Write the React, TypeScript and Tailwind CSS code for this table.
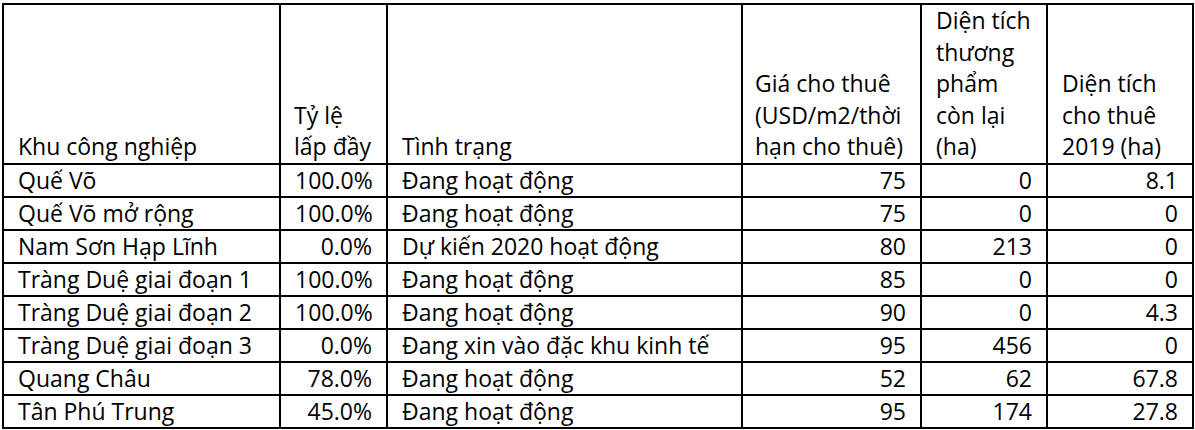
const rows = [
  ["Quế Võ", "100.0%", "Đang hoạt động", "75", "0", "8.1"],
  ["Quế Võ mở rộng", "100.0%", "Đang hoạt động", "75", "0", "0"],
  ["Nam Sơn Hạp Lĩnh", "0.0%", "Dự kiến 2020 hoạt động", "80", "213", "0"],
  ["Tràng Duệ giai đoạn 1", "100.0%", "Đang hoạt động", "85", "0", "0"],
  ["Tràng Duệ giai đoạn 2", "100.0%", "Đang hoạt động", "90", "0", "4.3"],
  ["Tràng Duệ giai đoạn 3", "0.0%", "Đang xin vào đặc khu kinh tế", "95", "456", "0"],
  ["Quang Châu", "78.0%", "Đang hoạt động", "52", "62", "67.8"],
  ["Tân Phú Trung", "45.0%", "Đang hoạt động", "95", "174", "27.8"],
];

export default function App() {
  return (
    <div className="w-[1195px] h-[430px] bg-white pl-[2px] pt-[3px] font-['Open_Sans',sans-serif] text-[23px] text-black">
      <table className="table-fixed border-collapse w-[1190px]">
        <colgroup>
          <col className="w-[277px]" />
          <col className="w-[107px]" />
          <col className="w-[355px]" />
          <col className="w-[179px]" />
          <col className="w-[126px]" />
          <col className="w-[146px]" />
        </colgroup>
        <thead className="leading-[31.5px]">
          <tr className="h-[158px]">
            <th className="border-2 border-black align-bottom text-left font-normal px-[14px]">Khu công nghiệp</th>
            <th className="border-2 border-black align-bottom text-left font-normal pl-[13px] pr-[4px] whitespace-nowrap">
              Tỷ lệ
              <br />
              lấp đầy
            </th>
            <th className="border-2 border-black align-bottom text-left font-normal px-[14px]">Tình trạng</th>
            <th className="border-2 border-black align-bottom text-left font-normal px-[12px] whitespace-nowrap">
              Giá cho thuê
              <br />
              (USD/m2/thời
              <br />
              hạn cho thuê)
            </th>
            <th className="border-2 border-black align-bottom text-left font-normal px-[14px] whitespace-nowrap">
              Diện tích
              <br />
              thương
              <br />
              phẩm
              <br />
              còn lại
              <br />
              (ha)
            </th>
            <th className="border-2 border-black align-bottom text-left font-normal px-[14px] whitespace-nowrap">
              Diện tích
              <br />
              cho thuê
              <br />
              2019 (ha)
            </th>
          </tr>
        </thead>
        <tbody className="leading-[31px]">
          {rows.map((r) => (
            <tr key={r[0]} className="h-[31px]">
              <td className="border-2 border-black align-bottom px-[14px] whitespace-nowrap">{r[0]}</td>
              <td className="border-2 border-black align-bottom px-[14px] text-right">{r[1]}</td>
              <td className="border-2 border-black align-bottom px-[14px] whitespace-nowrap">{r[2]}</td>
              <td className="border-2 border-black align-bottom px-[14px] text-right">{r[3]}</td>
              <td className="border-2 border-black align-bottom px-[14px] text-right">{r[4]}</td>
              <td className="border-2 border-black align-bottom px-[14px] text-right">{r[5]}</td>
            </tr>
          ))}
        </tbody>
      </table>
    </div>
  );
}
